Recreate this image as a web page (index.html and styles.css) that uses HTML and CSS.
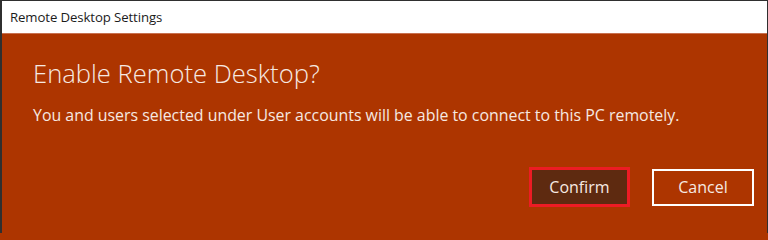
FILE: index.html
```html
<!DOCTYPE html>
<html>
<head>
<meta charset="utf-8">
<link rel="stylesheet" href="styles.css">
</head>
<body>
<div class="window">
  <div class="titlebar">Remote Desktop Settings</div>
  <div class="content">
    <h1 class="heading">Enable Remote Desktop?</h1>
    <p class="message">You and users selected under User accounts will be able to connect to this PC remotely.</p>
    <div class="actions">
      <button class="btn btn-confirm">Confirm</button>
      <button class="btn btn-cancel">Cancel</button>
    </div>
  </div>
</div>
</body>
</html>
```
FILE: styles.css
```css
html, body {
  margin: 0;
  padding: 0;
  width: 768px;
  height: 233px;
  overflow: hidden;
  background: #ad3500;
}
.window {
  box-sizing: border-box;
  width: 768px;
  height: 233px;
  border-top: 1px solid #2f2f2f;
  border-left: 2px solid #2f2f2f;
  border-right: 1px solid #2f2f2f;
  display: flex;
  flex-direction: column;
  font-family: "Open Sans", "Noto Sans", sans-serif;
}
.titlebar {
  height: 32px;
  background: #ffffff;
  border-bottom: 1px solid #c8704f;
  color: #1b1b1b;
  font-size: 13.2px;
  line-height: 32px;
  padding-left: 8px;
  letter-spacing: -0.1px;
}
.content {
  flex: 1;
  background: #ad3500;
  padding: 23px 0 0 31px;
  color: #f6e9e2;
}
.heading {
  margin: 0;
  font-size: 25.6px;
  font-weight: 300;
  line-height: 34px;
}
.message {
  margin: 13px 0 0 0;
  font-size: 15.9px;
  line-height: 22px;
}
.actions {
  display: flex;
  justify-content: flex-end;
  gap: 22px;
  margin-top: 41px;
  padding-right: 13px;
  align-items: center;
}
.btn {
  box-sizing: border-box;
  font-family: "Open Sans", "Noto Sans", sans-serif;
  font-size: 16px;
  color: #f6e9e2;
  padding: 0;
  cursor: pointer;
}
.btn-confirm {
  width: 101px;
  height: 40px;
  background: #5e2a10;
  border: 3px solid #ec1c24;
}
.btn-cancel {
  width: 102px;
  height: 37px;
  background: #ad3500;
  border: 2px solid #ffffff;
}
```
